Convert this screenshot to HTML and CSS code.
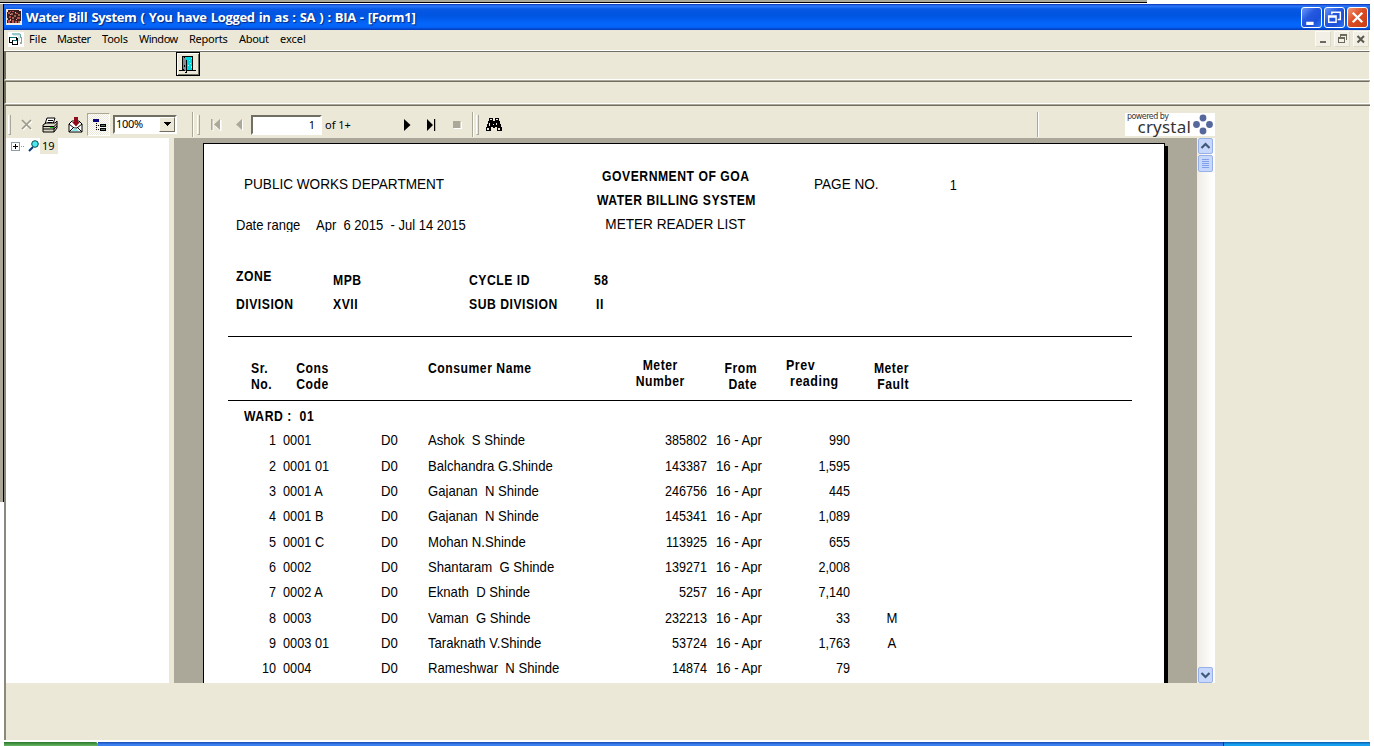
FILE: index.html
```html
<!DOCTYPE html>
<html lang="en">
<head>
<meta charset="utf-8">
<title>Water Bill System</title>
<link rel="stylesheet" href="styles.css">
</head>
<body>
<div class="desktop">
  <div class="edge-top"></div>
  <div class="edge-left"></div>
  <div class="window">
    <header class="titlebar">
      <svg class="app-icon" width="16" height="16" viewBox="0 0 16 16" shape-rendering="crispEdges">
        <rect width="16" height="16" fill="#f0e8e4"/><path fill="#3c1c1c" d="M2 1h11v1h2v10h-1v2H1V3h1z"/>
        <path fill="#c05050" d="M2 3h2v2H2zM6 2h2v1H6zM9 4h3v1H9zM3 7h2v2H3zM11 8h3v2h-3zM6 11h2v3H6zM2 11h2v3H2zM9 12h2v2H9z"/>
        <path fill="#986850" d="M5 4h2v2H5zM8 6h2v2H8zM12 5h2v2h-2zM6 8h2v2H6zM12 12h2v2h-2zM4 2h1v1H4z"/>
        <path fill="#e8a8a0" d="M4 5h1v1H4zM9 3h1v1H9zM4 10h1v2H4zM10 10h1v1h-1zM1 9h1v2H1z"/>
      </svg>
      <h1 class="title">Water Bill System ( You have Logged in as : SA ) : BIA - [Form1]</h1>
      <div class="caption-buttons">
        <svg class="cap cap-blue" viewBox="0 0 18 18"><path d="M4 13h7v3H4z" fill="#fff"/></svg>
        <svg class="cap cap-blue" viewBox="0 0 18 18"><path d="M6.500 6V4h8v7h-2.500" fill="none" stroke="#fff" stroke-width="1.400"/><path d="M3.500 7.500h7v6h-7zM3.500 8.500h7" fill="none" stroke="#fff" stroke-width="1.400"/></svg>
        <svg class="cap cap-red" viewBox="0 0 18 18"><path d="M4.500 4.500l9 9M13.500 4.500l-9 9" stroke="#fff" stroke-width="2.200"/></svg>
      </div>
    </header>
    <nav class="menubar">
      <svg class="form-icon" width="16" height="15" viewBox="0 0 16 15" shape-rendering="crispEdges">
        <rect width="16" height="15" fill="#fff"/><path fill="#98c8c8" d="M4 1h8v2H4z"/><path fill="#70a8a8" d="M12 2h1v3h1v5h-1V6h-1z"/><path fill="#d8e8e8" d="M5 3h7v6h-2V4H5z"/>
        <path fill="#000" d="M1 5h8v1h1v7H4v-2H1zM2 6v4h2V8h4V6zM5 9v3h4V9z" fill-rule="evenodd"/><path fill="#087878" d="M2 5h6v1H2zM5 8h4v1H5z"/><path fill="#a8a8a8" d="M12 10h2v2h-2z"/>
      </svg>
      <span class="menu m-file">File</span><span class="menu m-master">Master</span><span class="menu m-tools">Tools</span><span class="menu m-window">Window</span><span class="menu m-reports">Reports</span><span class="menu m-about">About</span><span class="menu m-excel">excel</span>
      <div class="mdi-buttons">
        <svg class="mdi" viewBox="0 0 14 14" shape-rendering="crispEdges"><path d="M4 9h6v2H4z" fill="#6c6a5c"/></svg>
        <svg class="mdi" viewBox="0 0 14 14" shape-rendering="crispEdges"><path d="M5 2h7v6h-1V4H6v1H5zM3 5h7v6H3zM4 7v3h5V7z" fill="#6c6a5c" fill-rule="evenodd"/></svg>
        <svg class="mdi" viewBox="0 0 14 14"><path d="M3.500 4l6.500 6.500M10 4l-6.500 6.500" stroke="#5c5a4e" stroke-width="2.100"/></svg>
      </div>
    </nav>
    <div class="band band-main">
      <button class="door" aria-label="Exit">
        <svg width="20" height="20" viewBox="0 0 20 20" shape-rendering="crispEdges">
          <path fill="#000" d="M1 16h17v1H1zM4 2h11v15H4z"/><path fill="#00d8e0" d="M7 3h7v13H7z"/><path fill="#a0ffff" d="M11 6h1v1h-1zM13 4h1v1h-1zM12 9h1v1h-1zM10 11h1v1h-1zM13 12h1v2h-1z"/>
          <path fill="#888890" d="M5 3l3 3v12l-3-3z"/><path fill="#000" d="M8 6h1v13H7v-1h1zM6 11h1v2H6z"/>
        </svg>
      </button>
    </div>
    <div class="band band-empty"></div>
    <main class="viewer">
      <div class="toolbar">
        <i class="grip grip-a"></i>
        <svg class="ico i-close" width="12" height="12" viewBox="0 0 12 12"><path d="M2 2l9 9M11 2l-9 9" stroke="#fff" stroke-width="1.500"/><path d="M1 1l9 9M10 1l-9 9" stroke="#9c998a" stroke-width="1.700"/></svg>
        <svg class="ico i-print" width="16" height="16" viewBox="0 0 16 16">
          <path d="M5 1h8l-2 6H3z" fill="#fff" stroke="#000"/><path d="M6 3.500h5M5.500 5.500h5" stroke="#000"/>
          <path d="M1 8l3-2h9l2-2v7l-3 4H1z" fill="#d8d5c4" stroke="#000"/><path d="M1 9.500h11l3-3M1 12h11l3-3M12 9v6" stroke="#000" fill="none"/><path d="M8 10.500h3" stroke="#20c020"/>
        </svg>
        <svg class="ico i-export" width="15" height="16" viewBox="0 0 15 16">
          <path d="M1 7l3-3h7l3 3v8H1z" fill="#fff" stroke="#000"/><path d="M1 7l5 4h3l5-4M1 15l5-5M14 15l-5-5" stroke="#000" fill="none"/><path d="M3 14l4-3 4 3z" fill="#80e8e8"/>
          <path d="M6 0h4v5h2l-4 4.500L4 5h2z" fill="#900c18"/>
        </svg>
        <span class="tree-toggle"><svg width="15" height="13" viewBox="0 0 15 13" shape-rendering="crispEdges"><path d="M0 0h6v3H0z" fill="#08087c"/><path d="M3 4h1v1H3zM3 6h1v1H3zM5 6h1v1H5zM3 8h1v1H3zM3 10h1v1H3zM5 10h1v1H5z" fill="#000"/><path d="M7 5h6v3H7zM7 9h6v3H7z" fill="#000"/><path d="M8 6h4v1H8zM8 10h4v1H8z" fill="#587c68"/></svg></span>
        <span class="combo"><span class="combo-value">100%</span><span class="combo-btn"><svg width="7" height="4" viewBox="0 0 7 4" shape-rendering="crispEdges"><path d="M0 0h7v1H6v1H5v1H4v1H3V3H2V2H1V1H0z"/></svg></span></span>
        <i class="divider d-a"></i><i class="grip"></i>
        <svg class="ico i-first" width="10" height="12" viewBox="0 0 10 12"><path d="M2 2v10M10 1v11L4 7" stroke="#fff" fill="#fff"/><path d="M0 0h1.500v11H0zM9 0v11L3 5.500z" fill="#aca899"/></svg>
        <svg class="ico i-prev" width="8" height="12" viewBox="0 0 8 12"><path d="M7 1v11L1 6.500z" fill="#fff"/><path d="M6 0v11L0 5.500z" fill="#aca899"/></svg>
        <span class="page-input">1</span><span class="of">of 1+</span>
        <svg class="ico i-next" width="8" height="12" viewBox="0 0 8 12"><path d="M0 0v12l6.500-6z"/></svg>
        <svg class="ico i-last" width="9" height="12" viewBox="0 0 9 12"><path d="M0 0v12l6-6zM7 0h1.200v12H7z"/></svg>
        <svg class="ico i-stop" width="9" height="8" viewBox="0 0 9 8"><path d="M1 1h8v7H1z" fill="#fff"/><path d="M0 0h7.500v7H0z" fill="#aca899"/></svg>
        <i class="divider d-b"></i><i class="grip"></i>
        <svg class="ico i-find" width="16" height="14" viewBox="0 0 16 14" shape-rendering="crispEdges"><path d="M3 0h4v3h2V0h4v3h1v3h1v3h1v4h-5V9H9v1H7V9H5v4H0V9h1V6h1V3h1z"/><path fill="#ebe8d7" d="M4 1h2v1H4zM10 1h2v1h-2zM3 5h1v3H3zM10 5h1v2h-1zM1 10h2v2H1zM12 10h2v2h-2zM7 6h1v1H7z"/></svg>
        <i class="divider d-c"></i>
        <div class="crystal">
          <span class="powered">powered by</span><span class="brand">crystal</span>
          <svg class="dots" width="20" height="21" viewBox="0 0 20 21" fill="#56679c"><circle cx="10" cy="4" r="3.400"/><circle cx="3.500" cy="10.500" r="3.400"/><circle cx="16.500" cy="10.500" r="3.400"/><circle cx="10" cy="17" r="3.400"/></svg>
        </div>
      </div>
      <div class="workarea">
        <aside class="tree">
          <svg class="expander" width="26" height="14" viewBox="0 0 26 14" shape-rendering="crispEdges"><path d="M.5 4.500h8v8h-8z" fill="#fff" stroke="#8c9ca8"/><path d="M2 8h5v1H2zM4 6h1v5H4z"/><path d="M10 8h1v1h-1zM12 8h1v1h-1z" fill="#999"/></svg>
          <svg class="lens" width="11" height="12" viewBox="0 0 11 12"><path d="M1 11l4-4" stroke="#083878" stroke-width="2"/><circle cx="7" cy="4" r="3.300" fill="#48e8f0" stroke="#104848"/></svg>
          <span class="node">19</span>
        </aside>
        <section class="canvas">
          <article class="sheet">
            <div class="report-head">
              <div class="head-left"><p class="dept caps">PUBLIC WORKS DEPARTMENT</p><p class="range"><span class="range-label">Date range</span><span class="range-value">Apr&nbsp; 6 2015&nbsp; - Jul 14 2015</span></p></div>
              <div class="head-mid"><b class="gov">GOVERNMENT OF GOA</b><b class="wbs">WATER BILLING SYSTEM</b><span class="mrl">METER READER LIST</span></div>
              <div class="head-right"><span class="page-label caps">PAGE NO.</span><span class="page-no">1</span></div>
            </div>
            <div class="facts">
              <b class="zone">ZONE</b><b>MPB</b><b class="cyc">CYCLE ID</b><b>58</b>
              <b>DIVISION</b><b>XVII</b><b>SUB DIVISION</b><b class="two">II</b>
            </div>
            <div class="columns">
              <b>Sr.<br>No.</b><b class="c-code">Cons<br>Code</b><b>Consumer Name</b><b class="c-meter">Meter<br>Number</b><b class="c-right">From<br>Date</b><b class="c-prev">Prev<br>&nbsp;reading</b><b class="c-right">Meter<br>Fault</b>
            </div>
            <p class="ward">WARD :&nbsp; 01</p>
            <div class="rows">
              <div class="row"><span>1</span><span>0001</span><span>D0</span><span>Ashok&nbsp; S Shinde</span><span>385802</span><span>16 - Apr</span><span>990</span><span></span></div>
              <div class="row"><span>2</span><span>0001 01</span><span>D0</span><span>Balchandra G.Shinde</span><span>143387</span><span>16 - Apr</span><span>1,595</span><span></span></div>
              <div class="row"><span>3</span><span>0001 A</span><span>D0</span><span>Gajanan&nbsp; N Shinde</span><span>246756</span><span>16 - Apr</span><span>445</span><span></span></div>
              <div class="row"><span>4</span><span>0001 B</span><span>D0</span><span>Gajanan&nbsp; N Shinde</span><span>145341</span><span>16 - Apr</span><span>1,089</span><span></span></div>
              <div class="row"><span>5</span><span>0001 C</span><span>D0</span><span>Mohan N.Shinde</span><span>113925</span><span>16 - Apr</span><span>655</span><span></span></div>
              <div class="row"><span>6</span><span>0002</span><span>D0</span><span>Shantaram&nbsp; G Shinde</span><span>139271</span><span>16 - Apr</span><span>2,008</span><span></span></div>
              <div class="row"><span>7</span><span>0002 A</span><span>D0</span><span>Eknath&nbsp; D Shinde</span><span>5257</span><span>16 - Apr</span><span>7,140</span><span></span></div>
              <div class="row"><span>8</span><span>0003</span><span>D0</span><span>Vaman&nbsp; G Shinde</span><span>232213</span><span>16 - Apr</span><span>33</span><span>M</span></div>
              <div class="row"><span>9</span><span>0003 01</span><span>D0</span><span>Taraknath V.Shinde</span><span>53724</span><span>16 - Apr</span><span>1,763</span><span>A</span></div>
              <div class="row"><span>10</span><span>0004</span><span>D0</span><span>Rameshwar&nbsp; N Shinde</span><span>14874</span><span>16 - Apr</span><span>79</span><span></span></div>
            </div>
          </article>
        </section>
        <div class="scrollbar">
          <svg class="sb" viewBox="0 0 13 14"><path d="M2.500 9L6.500 5l4 4" fill="none" stroke="#40587c" stroke-width="2.200"/></svg>
          <svg class="sb sb-thumb" viewBox="0 0 13 15" shape-rendering="crispEdges"><path d="M3 3h7v1H3zM3 5h7v1H3zM3 7h7v1H3zM3 9h7v1H3zM3 11h7v1H3z" fill="#80a0e8"/></svg>
          <svg class="sb sb-down" viewBox="0 0 13 14"><path d="M2.500 5l4 4 4-4" fill="none" stroke="#40587c" stroke-width="2.200"/></svg>
        </div>
      </div>
    </main>
  </div>
  <footer class="taskbar"><i class="start"></i><i class="tasks"></i><i class="tray"></i></footer>
</div>
</body>
</html>
```
FILE: styles.css
```css
* { box-sizing: border-box; }
body { margin: 0; background: #fff; font-family: "Noto Sans", sans-serif; font-size: 11px; color: #000; }
p, h1 { margin: 0; }
svg, i { display: block; flex: none; }
.desktop { display: grid; grid-template-columns: 4px 1366px; grid-template-rows: 4px 738px 4px; width: 1374px; height: 746px; overflow: hidden; }
.edge-top { grid-column: 1 / 3; width: 1147px; height: 3px; background: #aca899; border-bottom: 1px solid #000; }
.edge-left { width: 4px; height: 498px; background: #aca899; border-right: 1px solid #000; }
.window { display: flex; flex-direction: column; width: 1366px; background: #ebe8d7; border-bottom: 2px solid #fff; }

.titlebar { display: flex; align-items: center; height: 26px; padding: 0 2px; background: linear-gradient(#0830b8 0, #2c78f8 2px, #0858e4 5px, #0054e0 11px, #0466fc 20px, #0464f8 23px, #0438b8 26px); }
.app-icon { margin-top: -1px; }
.title { margin-left: 4px; font: bold 13px/20px "Open Sans", sans-serif; color: #fff; text-shadow: 1px 1px 1px #082878; white-space: nowrap; letter-spacing: -.33px; word-spacing: 1px; }
.caption-buttons { display: flex; gap: 2px; margin-left: auto; }
.cap { width: 21px; height: 21px; border: 1px solid #fff; border-radius: 3px; }
.cap-blue { background: linear-gradient(135deg, #6c98f8, #2458e0 40%, #1c50d8 70%, #2c78f8); }
.cap-red { background: linear-gradient(135deg, #f09878, #dc4c24 45%, #c83c14); }

.menubar { display: flex; align-items: center; height: 20px; padding: 0 0 2px 4px; border-right: 1px solid #fff; }
.menu { font: 11px/16px "Noto Sans", sans-serif; white-space: nowrap; }
.form-icon { margin-top: 1px; }
.m-file { margin-left: 5px; width: 28px; }
.m-master { width: 45px; letter-spacing: -.4px; }
.m-tools { width: 37px; letter-spacing: -.2px; }
.m-window { width: 50px; letter-spacing: -.5px; }
.m-reports { width: 50px; letter-spacing: -.25px; }
.m-about { width: 41px; letter-spacing: -.3px; }
.mdi-buttons { display: flex; gap: 3px; margin-left: auto; }
.mdi { width: 16px; height: 16px; background: #f2f0e6; border: 1px solid #fbfaf4; border-right-color: #dedac8; border-bottom-color: #dedac8; }

.band { border-style: solid; border-color: #716f64 #fff #fff #716f64; border-width: 1px 1px 1px 2px; }
.band-main { height: 29px; margin-top: 1px; padding-left: 170px; box-shadow: 0 -1px #fff; }
.band-empty { height: 23px; margin-top: 1px; box-shadow: 0 -1px #aca899; }
.door { display: block; width: 24px; height: 24px; padding: 1px; border: 1px solid #000; background: #ebe8d7; box-shadow: inset 1px 1px #fff, inset -1px -1px #716f64; }

.viewer { flex: 1; margin-top: 1px; border: solid #716f64; border-width: 1px 0 0 2px; border-left-color: #8c897c; box-shadow: 0 -1px #aca899, inset -1px 0 #fff; }
.toolbar { display: flex; align-items: center; width: 1209px; height: 32px; padding-top: 5px; }
.ico { overflow: visible; }
.grip { width: 3px; height: 20px; border-left: 1px solid #fff; border-right: 1px solid #aca899; border-bottom: 1px solid #aca899; }
.grip-a { margin-left: 2px; }
.divider { width: 2px; height: 25px; background: linear-gradient(90deg, #aca899 50%, #fff 50%); }
.i-close { margin-left: 10px; }
.i-print { margin-left: 9px; }
.i-export { margin-left: 10px; }
.tree-toggle { display: block; width: 23px; height: 23px; margin-left: 4px; padding: 5px 0 0 5px; border: 1px solid #aca899; border-right-color: #fff; border-bottom-color: #fff; background: repeating-conic-gradient(#fff 0 25%, #ebe8d7 0 50%) 0 0 / 2px 2px; }
.combo { display: flex; width: 64px; height: 19px; margin: 0 0 1px 3px; border: 2px solid; border-color: #716f64 #fff #fff #716f64; background: #fff; }
.combo-value { flex: 1; padding-left: 1px; font: 11px/14px "Noto Sans", sans-serif; letter-spacing: -.3px; }
.combo-btn { display: flex; align-items: center; justify-content: center; width: 16px; background: #ebe8d7; border: 1px solid; border-color: #fff #716f64 #716f64 #fff; }
.d-a { margin: 0 3px 0 15px; }
.i-first { margin-left: 11px; }
.i-prev { margin-left: 15px; }
.page-input { width: 71px; height: 20px; margin-left: 7px; padding-right: 5px; border: 2px solid; border-color: #716f64 #fff #fff #716f64; background: #fff; text-align: right; line-height: 15px; }
.of { width: 78px; padding-left: 3px; line-height: 16px; white-space: nowrap; }
.i-next { margin-left: 4px; }
.i-last { margin-left: 15px; }
.i-stop { margin-left: 17px; }
.d-b { margin: 0 2px 0 10px; }
.i-find { margin-left: 7px; }
.d-c { margin-left: 535px; }
.crystal { display: grid; grid-template-columns: 68px 22px; grid-template-rows: 8px 15px; width: 90px; height: 23px; margin-left: auto; background: #fff; color: #333; }
.powered { padding-left: 2px; font: 8px/8px "DejaVu Sans", sans-serif; letter-spacing: -.55px; white-space: nowrap; }
.brand { justify-self: end; margin-right: 2px; font: 17px/11px "Noto Sans", sans-serif; letter-spacing: .2px; }
.dots { grid-column: 2; grid-row: 1 / 3; margin-top: 1px; }

.workarea { display: flex; width: 1209px; height: 545px; }
.tree { display: flex; align-items: flex-start; width: 163px; height: 545px; padding-left: 5px; background: #fff; }
.lens { margin: 2px 0 0 -9px; }
.node { height: 16px; margin-left: 1px; padding: 0 3px 0 2px; background: #ebe8d7; line-height: 16px; }
.canvas { width: 1023px; height: 545px; margin-left: 5px; padding: 5px 0 0 29px; background: #aca899; overflow: hidden; }

/* The report faces are condensed: set at full width, then narrowed towards the edge they align to. */
.sheet { width: 962px; height: 560px; padding-top: 20px; border: 1px solid #000; background: #fff; box-shadow: 3px 3px #000; font: 15px/16px "Liberation Sans", sans-serif; }
.sheet b, .ward { font: bold 14px/16px "Liberation Sans", sans-serif; letter-spacing: .6px; white-space: nowrap; transform: scaleX(.87); transform-origin: left; }
.caps, .mrl { transform: scaleX(.905); transform-origin: left; }
.report-head { display: flex; height: 96px; white-space: nowrap; }
.head-left { width: 392px; padding: 12px 0 0 32px; }
.dept { margin-left: 8px; }
.range { display: flex; margin-top: 25px; }
.range-label { width: 80px; }
.range-label, .range-value { height: 15px; overflow: hidden; transform: scaleX(.867); transform-origin: left; }
.head-mid { display: flex; flex-direction: column; gap: 8px; align-items: center; width: 160px; padding-top: 4px; }
.sheet .head-mid b, .mrl { transform-origin: center; }
.head-right { display: flex; padding: 12px 0 0 58px; }
.page-label { width: 135px; }
.page-no { transform: translateY(1px) scaleX(.85); }
.facts { display: grid; grid-template-columns: 97px 136px 125px auto; gap: 8px 0; height: 76px; padding: 12px 0 0 32px; grid-auto-rows: 16px; }
.zone { margin-top: -4px; }
.two { margin-left: 2px; }
.columns { display: grid; grid-template-columns: 45px 132px 207px 50px 72px 89px 63px; width: 904px; height: 65px; margin-left: 24px; padding: 23px 0 0 23px; border: solid #000; border-width: 1px 0; }
.sheet .c-code { width: 33px; margin-left: -4px; text-align: right; transform-origin: right; }
.sheet .c-meter { justify-self: center; margin-top: -3px; text-align: center; transform-origin: center; }
.sheet .c-right { text-align: right; transform-origin: right; }
.sheet .c-prev { margin: -3px 0 0 29px; transform: scaleX(.89); }
.ward { margin: 7px 0 0 40px; }
.rows { margin-top: 3.4px; }
.row { display: grid; grid-template-columns: 72px 105px 47px 200px 79px 60px 83px 84px; height: 25.33px; padding-top: 5px; white-space: pre; }
.row span { transform: scaleX(.875); transform-origin: left; }
.row span:nth-child(1), .row span:nth-child(5), .row span:nth-child(7) { text-align: right; transform: scaleX(.84); transform-origin: right; }
.row span:nth-child(2) { margin-left: 7px; transform: scaleX(.85); }
.row span:nth-child(4), .row span:nth-child(6) { height: 15px; overflow: hidden; }
.row span:nth-child(6) { margin-left: 9px; width: 56px; }
.row span:nth-child(8) { text-align: center; transform-origin: center; }

.scrollbar { display: flex; flex-direction: column; gap: 1px; width: 18px; height: 545px; padding: 0 2px 0 1px; border-right: 2px solid #fff; background: linear-gradient(90deg, #efece4, #fff); }
.sb { width: 15px; height: 16px; border: 1px solid #98b0e8; border-radius: 2px; background: #c8d8fc; }
.sb-thumb { height: 17px; }
.sb-down { margin-top: auto; }

.taskbar { grid-column: 2; display: flex; }
.start { width: 94px; background: linear-gradient(#287828, #68b868); border-radius: 0 3px 0 0; }
.tasks { flex: 1; background: linear-gradient(#1848b0, #3c80f0 60%); }
.tray { width: 147px; background: linear-gradient(#0858a8, #18a0f0 60%); border-left: 1px solid #083878; }
```
